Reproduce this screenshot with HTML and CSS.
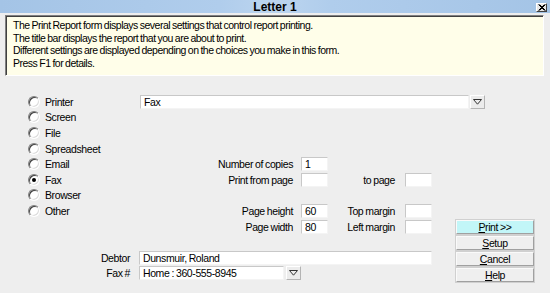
FILE: index.html
```html
<!DOCTYPE html>
<html>
<head>
<meta charset="utf-8">
<link rel="stylesheet" href="styles.css">
</head>
<body>
<div class="window">
  <div class="titlebar">
    <span class="title">Letter 1</span>
    <span class="close"><svg width="9" height="7" viewBox="0 0 9 7"><path d="M1.5 0.5 L7.5 6.5 M7.5 0.5 L1.5 6.5 M2.5 0.5 L8.5 6.5 M8.5 0.5 L2.5 6.5" stroke="#000" stroke-width="1"/></svg></span>
  </div>
  <div class="info">
    <div>The Print Report form displays several settings that control report printing.</div>
    <div>The title bar displays the report that you are about to print.</div>
    <div>Different settings are displayed depending on the choices you make in this form.</div>
    <div>Press F1 for details.</div>
  </div>
  <div class="main">
    <div class="left">
      <div class="top">
        <div class="radios">
          <div class="radio-row"><span class="radio"></span>Printer</div>
          <div class="radio-row"><span class="radio"></span>Screen</div>
          <div class="radio-row"><span class="radio"></span>File</div>
          <div class="radio-row"><span class="radio"></span>Spreadsheet</div>
          <div class="radio-row"><span class="radio"></span>Email</div>
          <div class="radio-row"><span class="radio checked"></span>Fax</div>
          <div class="radio-row"><span class="radio"></span>Browser</div>
          <div class="radio-row"><span class="radio"></span>Other</div>
        </div>
        <div class="fields">
          <div class="combo">
            <div class="input combo-input">Fax</div>
            <span class="drop"><svg width="9" height="6" viewBox="0 0 9 6"><path d="M0.5 0.5 H8.5 L4.5 5.2 Z" fill="none" stroke="#333" stroke-width="1"/></svg></span>
          </div>
          <div class="grid">
            <div class="lbl">Number of copies</div><div class="input small">1</div><div></div><div></div>
            <div class="lbl">Print from page</div><div class="input small"></div><div class="lbl lbl2">to page</div><div class="input small"></div>
            <div class="spacer"></div>
            <div class="lbl">Page height</div><div class="input small">60</div><div class="lbl lbl2">Top margin</div><div class="input small"></div>
            <div class="lbl">Page width</div><div class="input small">80</div><div class="lbl lbl2">Left margin</div><div class="input small"></div>
          </div>
        </div>
      </div>
      <div class="bottom">
        <div class="blbl">Debtor</div>
        <div class="input debtor">Dunsmuir, Roland</div>
        <div class="blbl">Fax #</div>
        <div class="combo">
          <div class="input faxno">Home : 360-555-8945</div>
          <span class="drop drop2"><svg width="9" height="6" viewBox="0 0 9 6"><path d="M0.5 0.5 H8.5 L4.5 5.2 Z" fill="none" stroke="#333" stroke-width="1"/></svg></span>
        </div>
      </div>
    </div>
    <div class="buttons">
      <div class="btn primary"><u>P</u>rint &gt;&gt;</div>
      <div class="btn"><u>S</u>etup</div>
      <div class="btn"><u>C</u>ancel</div>
      <div class="btn"><u>H</u>elp</div>
    </div>
  </div>
</div>
</body>
</html>
```
FILE: styles.css
```css
html, body {
  margin: 0;
  padding: 0;
}
body {
  width: 550px;
  height: 293px;
  background: #eeeeee;
  font-family: "Liberation Sans", Arial, sans-serif;
  font-size: 10.5px;
  letter-spacing: -0.4px;
  word-spacing: -0.5px;
  color: #000;
  overflow: hidden;
}
.window {
  width: 550px;
  height: 293px;
}
.titlebar {
  height: 13px;
  position: relative;
  background: linear-gradient(to right, #a4c4e6 0%, #b0cdec 40%, #bcd5ef 50%, #b0cdec 60%, #a4c4e6 100%);
  text-align: center;
}
.title {
  font-weight: bold;
  font-size: 12px;
  letter-spacing: 0;
  word-spacing: 0;
  line-height: 14px;
  color: #000;
}
.close {
  position: absolute;
  left: 536px;
  top: 3px;
  width: 9px;
  height: 7px;
  background: #e6e6e6;
  border: 1px solid;
  border-color: #fff #404040 #404040 #fff;
  display: flex;
  align-items: center;
  justify-content: center;
}
.close svg {
  display: block;
}
.info {
  margin: 2px 6px 0 5px;
  height: 56px;
  background: #fffee9;
  border-top: 1px solid #808080;
  border-left: 1px solid #808080;
  border-right: 1px solid #fff;
  border-bottom: 1px solid #fff;
  box-shadow: inset 1px 1px 0 #404040;
  padding: 3px 0 0 7px;
  line-height: 12.6px;
  letter-spacing: -0.5px;
}
.main {
  display: flex;
  margin-top: 18px;
}
.left {
  width: 456px;
  flex: none;
  display: flex;
  flex-direction: column;
}
.top {
  display: flex;
}
.radios {
  flex: none;
  box-sizing: border-box;
  width: 140px;
  padding-left: 28px;
  display: flex;
  flex-direction: column;
}
.radio-row {
  height: 15.6px;
  display: flex;
  align-items: center;
  gap: 5px;
}
.radio {
  flex: none;
  box-sizing: border-box;
  width: 12px;
  height: 12px;
  border-radius: 50%;
  border: 1px solid;
  border-color: #808080 #ffffff #ffffff #808080;
  box-shadow: inset 1px 1px 0 #404040, inset -1px -1px 0 #dcdcdc;
  background: #fff;
  position: relative;
}
.radio.checked::after {
  content: "";
  position: absolute;
  left: 3px;
  top: 3px;
  width: 4px;
  height: 4px;
  border-radius: 50%;
  background: #000;
}
.fields {
  flex: none;
  display: flex;
  flex-direction: column;
  padding-top: 1px;
}
.combo {
  display: flex;
  align-items: flex-start;
}
.input {
  flex: none;
  box-sizing: border-box;
  height: 14px;
  background: #fff;
  border-top: 1px solid #c8c8c8;
  border-left: 1px solid #c8c8c8;
  border-right: 1px solid #f4f4f4;
  border-bottom: 1px solid #f4f4f4;
  line-height: 12px;
  padding-left: 3px;
  white-space: nowrap;
}
.combo-input {
  width: 329px;
}
.drop {
  flex: none;
  box-sizing: border-box;
  width: 15px;
  height: 14px;
  margin-left: 1px;
  background: #ececec;
  border: 1px solid;
  border-color: #fff #b4b4b4 #b4b4b4 #fff;
  display: flex;
  align-items: center;
  justify-content: center;
}
.drop svg {
  display: block;
}
.drop2 {
  margin-left: 2px;
}
.grid {
  margin-top: 48px;
  display: grid;
  grid-template-columns: 161px 27px 77px 27px;
  grid-template-rows: 14px 14px 13px 14px 14px;
  row-gap: 2px;
}
.spacer {
  grid-column: 1 / -1;
}
.lbl {
  text-align: right;
  padding-right: 8px;
  line-height: 14px;
  white-space: nowrap;
}
.lbl2 {
  padding-right: 10px;
}
.small {
  width: 27px;
}
.bottom {
  margin-top: 17px;
  display: grid;
  grid-template-columns: 139px auto;
  grid-auto-rows: 14px;
  row-gap: 1px;
}
.blbl {
  text-align: right;
  padding-right: 9px;
  line-height: 14px;
}
.debtor {
  width: 293px;
}
.faxno {
  width: 145px;
}
.buttons {
  margin-top: 126px;
  width: 78px;
  flex: none;
  display: flex;
  flex-direction: column;
  gap: 2px;
}
.btn {
  box-sizing: border-box;
  height: 14px;
  background: #efefef;
  border: 1px solid;
  border-color: #fafafa #a0a0a0 #a0a0a0 #fafafa;
  outline: 1px solid #d0d0d0;
  text-align: center;
  line-height: 12px;
}
.btn.primary {
  background: #c2f6f8;
}
```
